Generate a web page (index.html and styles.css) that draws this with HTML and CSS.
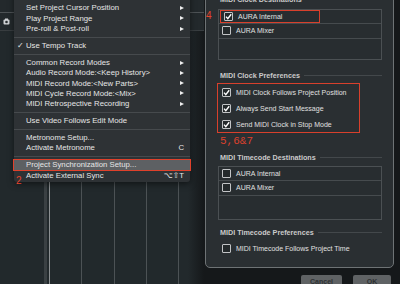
FILE: index.html
```html
<!DOCTYPE html>
<html lang="en">
<head>
  <meta charset="UTF-8">
  <meta name="viewport" content="width=device-width, initial-scale=1.0">
  <title>Project Synchronization Setup</title>
  <link rel="stylesheet" href="styles.css">
</head>
<body>
<div class="screen">
  <!-- arrange window with the transport menu open -->
  <div class="arrange">
    <div class="arr-head"></div>
    <div class="arr-bar">
      <svg class="cam" width="7" height="7" viewBox="0 0 7 7">
        <rect x="0.5" y="1.5" width="6" height="5" rx="1" fill="#cfd2d4"/>
        <rect x="2" y="0.5" width="3" height="1.5" fill="#cfd2d4"/>
        <circle cx="3.5" cy="4" r="1.3" fill="#2a2f32"/>
      </svg>
    </div>
    <div class="arr-tracks"></div>

    <div class="menu">
      <div class="item"><span class="tick"></span><span class="label">Punch Points</span><span class="arrow"></span></div>
      <div class="item"><span class="tick"></span><span class="label">Set Project Cursor Position</span><span class="arrow"></span></div>
      <div class="item"><span class="tick"></span><span class="label">Play Project Range</span><span class="arrow"></span></div>
      <div class="item"><span class="tick"></span><span class="label">Pre-roll &amp; Post-roll</span><span class="arrow"></span></div>
      <div class="sep"></div>
      <div class="item"><span class="tick">✓</span><span class="label">Use Tempo Track</span></div>
      <div class="sep"></div>
      <div class="item"><span class="tick"></span><span class="label">Common Record Modes</span><span class="arrow"></span></div>
      <div class="item"><span class="tick"></span><span class="label">Audio Record Mode:&lt;Keep History&gt;</span><span class="arrow"></span></div>
      <div class="item"><span class="tick"></span><span class="label">MIDI Record Mode:&lt;New Parts&gt;</span><span class="arrow"></span></div>
      <div class="item"><span class="tick"></span><span class="label">MIDI Cycle Record Mode:&lt;Mix&gt;</span><span class="arrow"></span></div>
      <div class="item"><span class="tick"></span><span class="label">MIDI Retrospective Recording</span><span class="arrow"></span></div>
      <div class="sep"></div>
      <div class="item"><span class="tick"></span><span class="label">Use Video Follows Edit Mode</span></div>
      <div class="sep"></div>
      <div class="item"><span class="tick"></span><span class="label">Metronome Setup...</span></div>
      <div class="item"><span class="tick"></span><span class="label">Activate Metronome</span><span class="key">C</span></div>
      <div class="sep"></div>
      <div class="item active"><span class="tick"></span><span class="label">Project Synchronization Setup...</span></div>
      <div class="item"><span class="tick"></span><span class="label">Activate External Sync</span><span class="key">⌥⇧T</span></div>
    </div>
    <span class="note note-2">2</span>
  </div>

  <!-- sync setup dialog -->
  <div class="dialog">
    <div class="panel">
      <div class="group-title">MIDI Clock Destinations</div>
      <div class="list list-1">
        <div class="row">
          <span class="mark"><span class="cb on"><svg viewBox="0 0 9 9"><path d="M2 4.6 L3.8 6.6 L7.2 2.2"/></svg></span>AURA Internal</span>
        </div>
        <div class="row"><span class="cb"></span>AURA Mixer</div>
      </div>

      <div class="group-title">MIDI Clock Preferences</div>
      <div class="annot">
        <div class="opt"><span class="cb on"><svg viewBox="0 0 9 9"><path d="M2 4.6 L3.8 6.6 L7.2 2.2"/></svg></span>MIDI Clock Follows Project Position</div>
        <div class="opt"><span class="cb on"><svg viewBox="0 0 9 9"><path d="M2 4.6 L3.8 6.6 L7.2 2.2"/></svg></span>Always Send Start Message</div>
        <div class="opt"><span class="cb on"><svg viewBox="0 0 9 9"><path d="M2 4.6 L3.8 6.6 L7.2 2.2"/></svg></span>Send MIDI Clock in Stop Mode</div>
      </div>
      <div class="steps">5,6&amp;7</div>

      <div class="group-title t3">MIDI Timecode Destinations</div>
      <div class="list list-2">
        <div class="row"><span class="cb"></span>AURA Internal</div>
        <div class="row"><span class="cb"></span>AURA Mixer</div>
      </div>

      <div class="group-title t4">MIDI Timecode Preferences</div>
      <div class="opt last"><span class="cb"></span>MIDI Timecode Follows Project Time</div>
    </div>

    <div class="buttons">
      <button class="btn btn-cancel">Cancel</button>
      <button class="btn btn-ok">OK</button>
    </div>
    <span class="note note-4">4</span>
  </div>
</div>
</body>
</html>
```

FILE: styles.css
```css
html, body{
  margin: 0;
  padding: 0;
  background: #15181a;
}
.screen{
  display: flex;
  width: 400px;
  height: 284px;
  overflow: hidden;
  font-family: "Liberation Sans", "DejaVu Sans", sans-serif;
}

/* ---------- arrange window ---------- */
.arrange{
  position: relative;
  width: 204px;
  display: flex;
  flex-direction: column;
  background: #23292c;
}
.arr-head{
  height: 12px;
  border-bottom: 1px solid #4d5255;
}
.arr-bar{
  height: 17px;
  display: flex;
  align-items: center;
  padding-left: 3px;
  border-bottom: 1px solid #383d40;
}
.cam{
  display: block;
}
.arr-tracks{
  flex: 1;
  background:
    linear-gradient(to right, rgba(21,24,26,0), #15181a) right 0 / 16px 100% no-repeat,
    linear-gradient(#8c9092, #8c9092) 49px 0 / 1px 100% no-repeat,
    linear-gradient(#3a4043, #3a4043) 44px 0 / 3px 100% no-repeat,
    linear-gradient(#4c5255, #4c5255) 81px 0 / 1px 100% no-repeat,
    linear-gradient(#4c5255, #4c5255) 114px 0 / 1px 100% no-repeat,
    linear-gradient(#4c5255, #4c5255) 146px 0 / 1px 100% no-repeat,
    linear-gradient(#4c5255, #4c5255) 178px 0 / 1px 100% no-repeat,
    #22292c;
}

/* ---------- dropdown menu ---------- */
.menu{
  position: absolute;
  left: 14px;
  top: -9px;
  width: 176px;
  padding: 1.5px 0;
  background: #2e3235;
  border-radius: 0 0 3px 3px;
  box-shadow: 0 2px 6px rgba(0,0,0,0.5);
}
.item{
  display: flex;
  align-items: center;
  height: 10.3px;
  padding: 0 6px 0 3px;
  font-size: 7.75px;
  color: #e6e6e6;
  white-space: nowrap;
}
.tick{
  width: 9px;
  font-size: 8px;
}
.label{
  flex: 1;
}
.arrow{
  width: 0;
  height: 0;
  border-left: 4px solid #eeeeee;
  border-top: 2.5px solid transparent;
  border-bottom: 2.5px solid transparent;
}
.key{
  font-size: 7.75px;
}
.sep{
  height: 1px;
  margin: 2.85px 0;
  background: #464a4d;
}
.item.active{
  background: #5d6063;
  outline: 1.5px solid #e0412b;
}

/* red step labels */
.note{
  position: absolute;
  color: #e8432d;
  font-size: 10px;
  line-height: 10px;
}
.note-2{
  left: 16px;
  top: 176px;
}
.note-4{
  left: 2px;
  top: 11px;
}

/* ---------- dialog ---------- */
.dialog{
  position: relative;
  flex: 1;
  display: flex;
  flex-direction: column;
  background: #15181a;
}
.panel{
  margin: -7px 6px 0 1px;
  padding: 0 11px 10.5px 12px;
  background: #2a2f32;
  border: 1px solid #6e7375;
  border-radius: 0 0 5px 5px;
  font-size: 7px;
  color: #e0e0e0;
}
.group-title{
  display: flex;
  align-items: center;
  gap: 4px;
  height: 11px;
  padding-left: 2px;
  font-weight: bold;
  font-size: 7.2px;
  color: #cacaca;
  white-space: nowrap;
}
.group-title::after{
  content: "";
  flex: 1;
  height: 1px;
  background: #43484b;
}
.list{
  box-sizing: border-box;
  border: 1px solid #4b5053;
  background: #282d30;
}
.list-1{
  margin: 3.5px 0 10px;
  height: 51px;
}
.list-2{
  margin-top: 2.5px;
  height: 54px;
}
.row{
  box-sizing: border-box;
  display: flex;
  align-items: center;
  height: 14.5px;
  padding-left: 3px;
  border-bottom: 1px solid #464b4e;
}
.mark{
  box-sizing: border-box;
  display: flex;
  align-items: center;
  width: 98px;
  height: 11px;
  margin-left: -1px;
  padding-left: 3px;
  outline: 1.5px solid #d8402c;
}
.cb{
  box-sizing: border-box;
  display: inline-block;
  flex: none;
  width: 9px;
  height: 9px;
  margin-right: 5px;
  border: 1px solid #c2c4c6;
  border-radius: 1px;
  background: #24292b;
}
.cb svg{
  display: block;
  width: 7px;
  height: 7px;
  margin: 0;
}
.cb svg path{
  fill: none;
  stroke: #ffffff;
  stroke-width: 1.4;
}
.cb.on svg{
  width: 9px;
  height: 9px;
  margin: -1px;
}
.annot{
  width: 141px;
  margin-top: 3.5px;
  outline: 1.5px solid #d8402c;
}
.opt{
  display: flex;
  align-items: center;
  height: 16px;
  padding-left: 4px;
  white-space: nowrap;
}
.opt.last{
  margin-top: 2.5px;
}
.steps{
  margin-top: 2.5px;
  height: 12px;
  line-height: 12px;
  padding-left: 2px;
  font-family: "Liberation Mono", monospace;
  font-size: 11px;
  color: #dc412d;
}
.t3{
  margin-top: 5.5px;
}
.t4{
  margin-top: 7.5px;
}

/* ---------- dialog buttons ---------- */
.buttons{
  display: flex;
  justify-content: flex-end;
  gap: 11px;
  margin-top: 6.5px;
  padding-right: 9px;
}
.btn{
  height: 14px;
  padding: 0;
  border: none;
  border-radius: 2px;
  background: #5f6264;
  color: #2e3133;
  font-family: "Liberation Sans", sans-serif;
  font-size: 7px;
  font-weight: bold;
}
.btn-cancel{
  width: 41px;
}
.btn-ok{
  width: 38px;
}
```
